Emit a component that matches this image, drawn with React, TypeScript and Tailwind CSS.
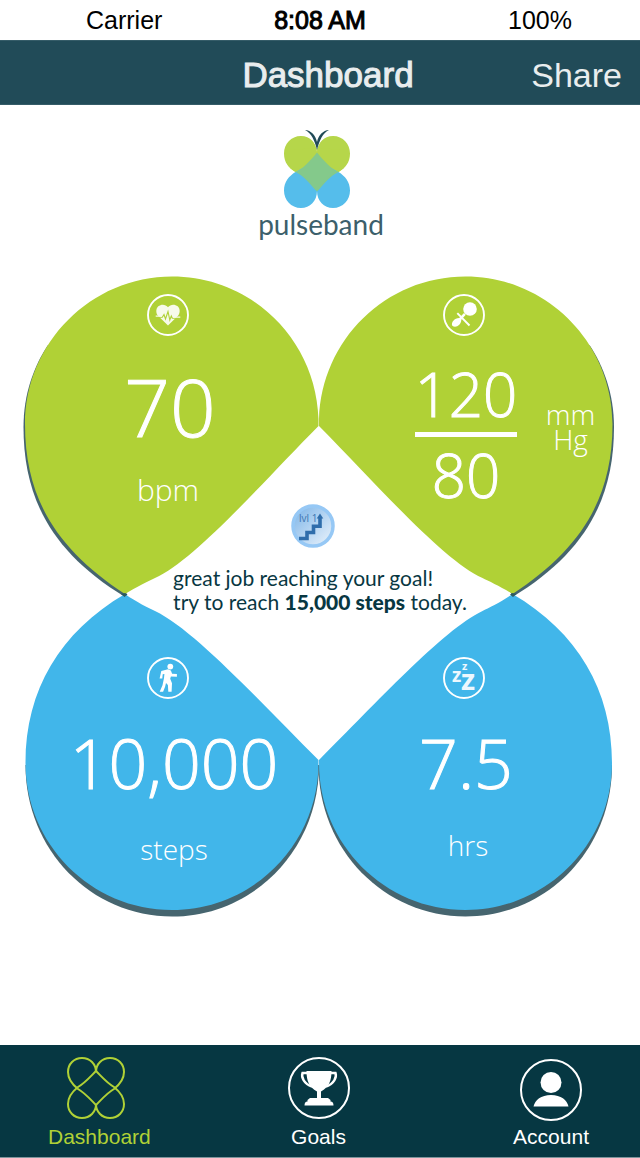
import type { ReactNode } from "react";

function Logo() {
  return (
    <svg viewBox="284 130 66 78" className="h-[78px] w-[66px]" aria-hidden="true">
      <path
        fill="#b6d64a"
        d="M317 153C317 143 310 136 301 136C291 136 284 144 284 153.500C284 163 289 168 295.500 172L317 191L338.500 172C345 168 350 163 350 153.500C350 144 343 136 333 136C324 136 317 143 317 153Z"
      />
      <path
        fill="#55bdeb"
        d="M317 191C317 201 310 208 301 208C291 208 284 200 284 190.500C284 182 289 176 295.500 172L317 160L338.500 172C345 176 350 182 350 190.500C350 200 343 208 333 208C324 208 317 201 317 191Z"
      />
      <path
        fill="#b6d64a"
        d="M317 153L295.500 172L290 168V150L317 148L344 150V168L338.500 172Z"
      />
      <path
        fill="#84c98b"
        d="M317 152.500C310 161 303 169 295.500 172C303 175 310 184 317 191.500C324 184 331 175 338.500 172C331 169 324 161 317 152.500Z"
      />
      <path fill="#fff" d="M317 152C317 146 314 141 310 138L317 134L324 138C320 141 317 146 317 152Z" />
      <path
        fill="#214b58"
        d="M317 150C315 141 311 132.500 305 130C311 130.500 315.500 135 317 142C318.500 135 323 130.500 329 130C323 132.500 319 141 317 150Z"
      />
    </svg>
  );
}

function Wings() {
  const shadow = (
    <>
      <path d="M125 597C53 553 23.500 500 23.500 427C23.500 394 34 366 48 345L140 560Z" />
      <path d="M25.500 765C25.500 850 91 916.500 172 916.500C253 916.500 319 850 319 765Z" />
    </>
  );
  const green =
    "M318.500 419C316 340 252 276.500 172 276.500C91 276.500 25 343 25 424C25 500 58 550 125 594C136 587 149 581 155 578C195 560 262 483 318.500 426Z";
  const blue =
    "M125 594C60 632 25.500 690 25.500 763C25.500 844 91 910 172 910C253 910 318.500 844 318.500 763V760C262 704 195 630 155 611C149 608 136 602 125 594Z";
  return (
    <svg viewBox="0 276 640 642" className="col-start-1 row-start-1 w-full" aria-hidden="true">
      <g fill="#46656f">
        {shadow}
        <g transform="translate(637.500 0) scale(-1 1)">{shadow}</g>
      </g>
      <path fill="#b0d136" d={green} />
      <path fill="#b0d136" d={green} transform="translate(637.500 0) scale(-1 1)" />
      <path fill="#41b6ea" d={blue} />
      <path fill="#41b6ea" d={blue} transform="translate(637.500 0) scale(-1 1)" />
      <path
        fill="#2c5a60"
        d="M121 594L124.500 597L127.500 594.500L125 593ZM516.500 594L513 597L510 594.500L512.500 593Z"
      />
    </svg>
  );
}

function RoundIcon({ children }: { children: ReactNode }) {
  return (
    <svg viewBox="0 0 42 42" className="h-[42px] w-[42px] fill-white" aria-hidden="true">
      <circle cx="21" cy="21" r="20" fill="none" stroke="#fff" strokeWidth="1.9" />
      {children}
    </svg>
  );
}

function HeartIcon() {
  return (
    <RoundIcon>
      <path
        fill="#f7faea"
        d="M21 31.500L10.800 21.500C8.700 19 8.800 14.500 11.300 12.300C14.300 9.700 18.800 10.200 21 13.300C23.200 10.200 27.700 9.700 30.700 12.300C33.200 14.500 33.300 19 31.200 21.500Z"
      />
      <path
        d="M8.700 23.300H15.300L17 20.500L18.500 25L21 17.500L22.800 26L24.300 22L25.300 24.300H33.300"
        fill="none"
        stroke="#b0d136"
        strokeWidth="1.100"
      />
      <path d="M8.700 21.600H15V22.800H8.700ZM26 22.600H33.300V23.800H26Z" fill="#f7faea" />
    </RoundIcon>
  );
}

function PressureIcon() {
  return (
    <RoundIcon>
      <circle cx="27" cy="15" r="6.800" />
      <path d="M9.300 31.700C7.800 28.500 11.500 24 16.200 24L21 19L22.800 20.800L18.300 25.800C18.300 31 12.500 34.700 9.300 31.700Z" />
      <path d="M14.300 19.200L26.500 31.500" stroke="#fff" strokeWidth="1.900" />
    </RoundIcon>
  );
}

function WalkIcon() {
  return (
    <RoundIcon>
      <circle cx="23.300" cy="9.600" r="2.900" />
      <path d="M14.300 14L21 12.300L23.900 13.500L25.100 16.700L29.900 17V19.700L23.900 19.400L23.200 21.700L25 26.300L24.600 34.700H21.300L20.900 27.900L19 25.900L18.100 29.700L16.100 34.700H12.700L15.500 28.300L17 21L17.400 17L15.700 17.200L15.300 21.400H12.600Z" />
    </RoundIcon>
  );
}

function SleepIcon() {
  return (
    <RoundIcon>
      <g fill="#edf8fe" fontFamily="Open Sans, sans-serif" fontWeight="700">
        <text x="19" y="13" fontSize="11">z</text>
        <text x="9" y="25" fontSize="19">z</text>
        <text x="18" y="33" fontSize="29">z</text>
      </g>
    </RoundIcon>
  );
}

function LevelBadge() {
  return (
    <svg viewBox="0 0 44 44" className="h-11 w-11" role="img" aria-label="Level 1">
      <defs>
        <linearGradient id="badge" x1="0" y1="0" x2="1" y2="1">
          <stop offset="0.1" stopColor="#85b9e9" />
          <stop offset="1" stopColor="#eef5fc" />
        </linearGradient>
      </defs>
      <circle cx="22" cy="22" r="20" fill="url(#badge)" stroke="#96c8f5" strokeWidth="3.500" />
      <text x="8" y="18" fontSize="10" fill="#3b74b0" fontFamily="Open Sans, sans-serif">lvl 1</text>
      <path
        d="M8 34.500H16V28.500H22.500V22.300H29V13"
        fill="none"
        stroke="#2f6dab"
        strokeWidth="3.600"
      />
      <path fill="#2f6dab" d="M25.700 14.500L29 9.500L32.300 14.500Z" />
    </svg>
  );
}

function WingsOutlineIcon() {
  const heart =
    "M29 15C29 7 23 1 15 1C7 1 1 7 1 15C1 23 6 28 11 32C18 36 23 42 29 48C35 42 40 36 47 32C52 28 57 23 57 15C57 7 51 1 43 1C35 1 29 7 29 15Z";
  return (
    <svg viewBox="0 0 58 62" className="h-[62px] w-[58px]" fill="none" stroke="#b0d136" strokeWidth="2" aria-hidden="true">
      <path d={heart} />
      <path d={heart} transform="translate(0 62) scale(1 -1)" />
    </svg>
  );
}

function TrophyIcon() {
  return (
    <svg viewBox="0 0 62 62" className="h-[62px] w-[62px] fill-white" aria-hidden="true">
      <circle cx="31" cy="31" r="30" fill="none" stroke="#fff" strokeWidth="2" />
      <path d="M18.500 14H43.500C43.500 24 41 30 33 34.500V41H40L42.500 43V44.500C44.500 44.500 45.500 46 45.500 48.500H16.500C16.500 46 17.500 44.500 19.500 44.500V43L22 41H29V34.500C21 30 18.500 24 18.500 14Z" />
      <path
        d="M20 16H14.500C13 20 16 27 24 29.500M42 16H47.500C49 20 46 27 38 29.500"
        fill="none"
        stroke="#fff"
        strokeWidth="2.400"
      />
    </svg>
  );
}

function AccountIcon() {
  return (
    <svg viewBox="0 0 62 62" className="h-[62px] w-[62px] fill-white" aria-hidden="true">
      <circle cx="31" cy="31" r="30" fill="none" stroke="#fff" strokeWidth="2" />
      <circle cx="31" cy="23.500" r="10.500" />
      <path d="M13.500 47.500C15 41 21 36 31 36C41 36 47 41 48.500 47.500Z" />
    </svg>
  );
}

export default function App() {
  return (
    <div className="flex min-h-screen flex-col bg-white font-['Liberation_Sans',Arial,sans-serif]">
      <div className="grid h-10 grid-cols-[1fr_auto_1fr] items-center pt-0.5 text-[25px] text-black">
        <span className="pl-[86px]">Carrier</span>
        <time className="[-webkit-text-stroke:1px]">8:08 AM</time>
        <span className="pr-[68px] text-right">100%</span>
      </div>

      <header className="grid h-[65px] grid-cols-[1fr_auto_1fr] items-center border-y border-[#355c68] bg-[#214b58] pt-1.5 pr-[18px] pl-[34px] text-[35px] text-[#e9edee]">
        <h1 className="col-start-2 [-webkit-text-stroke:1px]">Dashboard</h1>
        <button type="button" className="justify-self-end text-[34px]">Share</button>
      </header>

      <main className="mx-auto w-full max-w-[640px] flex-1 font-[Lato,sans-serif]">
        <div className="flex flex-col items-center pt-[25px] pr-1.5">
          <Logo />
          <p className="pl-2 text-[28px] leading-8 text-[#3c5f6b]">pulseband</p>
        </div>

        <div className="mt-9 grid">
          <Wings />

          <div className="col-start-1 row-start-1 grid grid-cols-2 grid-rows-[363px_auto] pr-7 pl-5 text-center font-['Open_Sans',sans-serif] font-light text-white">
            <section aria-label="Heart rate" className="flex flex-col items-center pt-[18px]">
              <HeartIcon />
              <p className="mt-[30px] pl-1 text-[80px] leading-[80px] [-webkit-text-stroke:1px]">70</p>
              <p className="mt-6 text-[30px] leading-10">bpm</p>
            </section>

            <section aria-label="Blood pressure" className="flex flex-col items-center pt-[18px]">
              <PressureIcon />
              <div className="mt-7 grid w-full grid-cols-[1fr_auto_1fr] items-start pl-1">
                <div className="col-start-2 flex w-[102px] flex-col items-center text-[60px] leading-[60px] [-webkit-text-stroke:1px]">
                  <p>120</p>
                  <div className="my-2 h-[5px] w-full bg-white" />
                  <p>80</p>
                </div>
                <p className="mt-[38px] pl-3 text-[28px] leading-[25px]">
                  mm
                  <br />
                  Hg
                </p>
              </div>
            </section>

            <section aria-label="Steps" className="flex flex-col items-center pt-[18px]">
              <WalkIcon />
              <p className="mt-6 pl-3 text-[68px] leading-[80px] [-webkit-text-stroke:1px]">10,000</p>
              <p className="mt-[26px] pl-3 text-[28px] leading-10">steps</p>
            </section>

            <section aria-label="Sleep" className="flex flex-col items-center pt-[18px]">
              <SleepIcon />
              <p className="mt-6 pl-1 text-[68px] leading-[80px] [-webkit-text-stroke:1px]">7.5</p>
              <p className="mt-[22px] pl-2 text-[28px] leading-10">hrs</p>
            </section>
          </div>

          <div className="col-start-1 row-start-1 flex flex-col items-center self-start justify-self-center pt-[228px]">
            <div className="pr-3.5">
              <LevelBadge />
            </div>
            <p className="mt-[18px] text-[21px] leading-6 text-[#083742]">
              great job reaching your goal!
              <br />
              try to reach <strong className="font-black">15,000 steps</strong> today.
            </p>
          </div>
        </div>
      </main>

      <nav className="grid h-[113px] grid-cols-[1fr_auto_1fr] items-start border-b border-[#7d959c] bg-[#063742] pt-3 pr-[51px] pl-12 text-[21px] leading-6 text-white">
        <a href="#dashboard" aria-current="page" className="flex flex-col items-center gap-1.5 justify-self-start text-[#b0d136]">
          <span className="pr-1.5">
            <WingsOutlineIcon />
          </span>
          Dashboard
        </a>
        <a href="#goals" className="flex flex-col items-center gap-1.5">
          <TrophyIcon />
          Goals
        </a>
        <a href="#account" className="flex flex-col items-center gap-1 justify-self-end pt-0.5">
          <AccountIcon />
          Account
        </a>
      </nav>
    </div>
  );
}
